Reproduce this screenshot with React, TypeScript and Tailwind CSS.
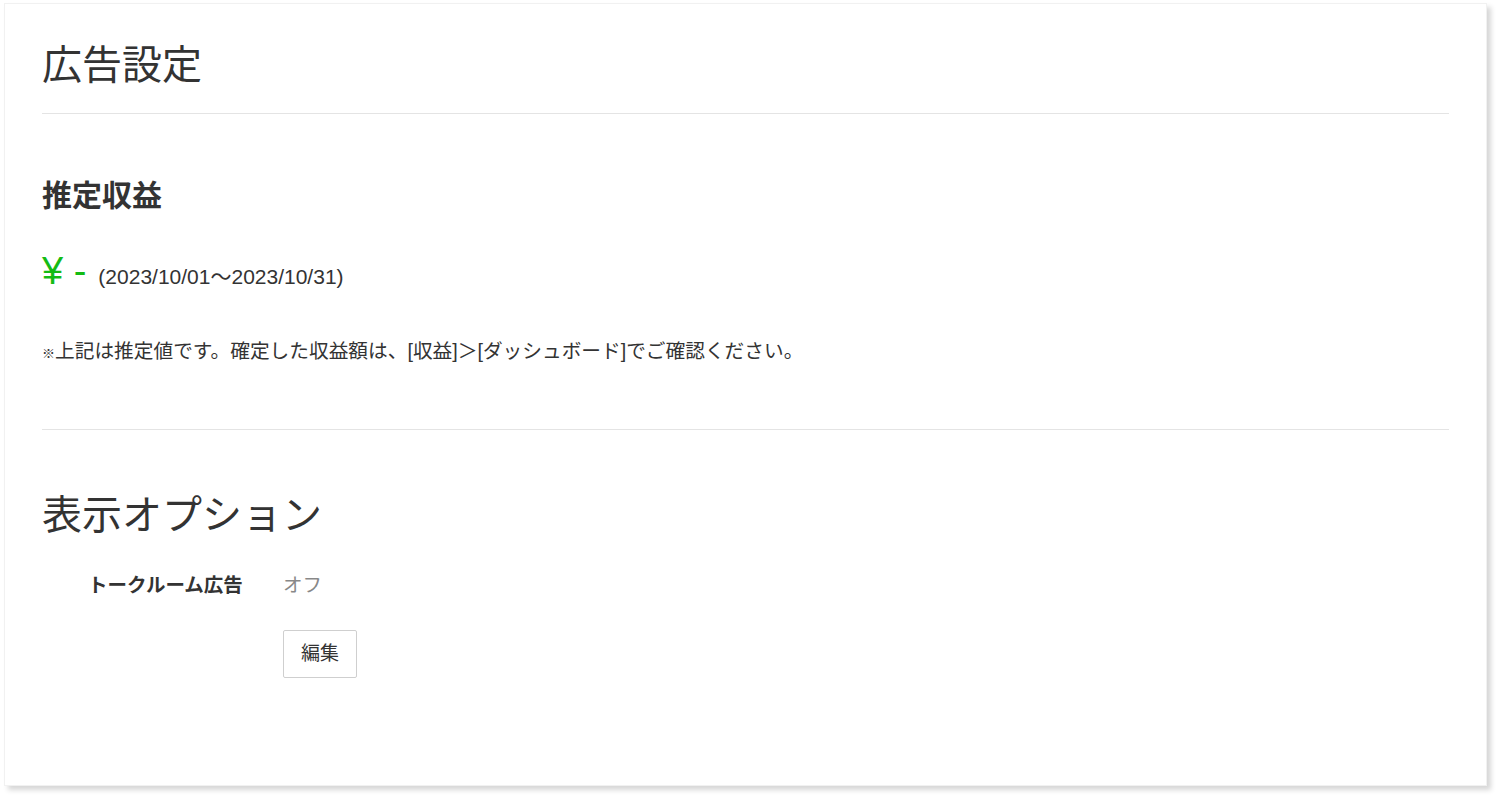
const font = { fontFamily: '"Liberation Sans", "Noto Sans CJK JP", sans-serif' };

export default function App() {
  return (
    <div className="w-[1500px] h-[799px] bg-white pt-[3px] pl-[4px]" style={font}>
      {/* Card */}
      <div className="w-[1483px] h-[783px] bg-white border border-[#f1f1f1] shadow-[4px_4px_5px_rgba(0,0,0,0.16)] px-[37px] pt-[31px] text-[#333]">
        {/* Page title */}
        <h1 className="h-[60px] leading-[60px] text-[40px] font-normal text-[#333]">広告設定</h1>
        <div className="mt-[18px] h-px bg-[#e4e4e4]" />

        {/* Estimated revenue */}
        <section className="pt-[62px]">
          <h2 className="h-[40px] leading-[40px] text-[30px] font-bold text-[#333]">推定収益</h2>
          <div className="mt-[33px] flex items-baseline">
            <span className="text-[38px] leading-[44px] text-[#14bb14]">¥ -</span>
            <span className="ml-[12px] text-[21px] text-[#333]">(2023/10/01～2023/10/31)</span>
          </div>
          <p className="mt-[44px] text-[19.7px] leading-[28px] text-[#333]">
            <span className="text-[13px]">※</span>上記は推定値です。確定した収益額は、[収益]＞[ダッシュボード]でご確認ください。
          </p>
        </section>

        <div className="mt-[61px] h-px bg-[#e4e4e4]" />

        {/* Display options */}
        <section className="pt-[55px]">
          <h1 className="h-[60px] leading-[60px] text-[40px] font-normal text-[#333]">表示オプション</h1>
          <div className="mt-[25px] grid grid-cols-[241px_1fr] items-center">
            <div className="pl-[46px] text-[19.5px] font-bold leading-[30px] text-[#333]">トークルーム広告</div>
            <div className="text-[19.5px] leading-[30px] text-[#888]">オフ</div>
            <div />
            <div className="pt-[30px]">
              <button className="w-[74px] h-[48px] border border-[#cfcfcf] rounded-[2px] bg-white text-[19px] text-[#333]">
                編集
              </button>
            </div>
          </div>
        </section>
      </div>
    </div>
  );
}
